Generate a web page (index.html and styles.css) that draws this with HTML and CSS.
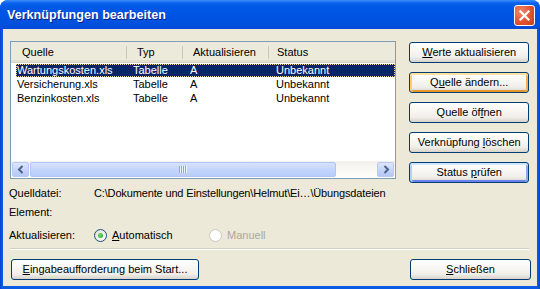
FILE: index.html
```html
<!DOCTYPE html>
<html lang="de">
<head>
<meta charset="utf-8"/>
<title>Verknüpfungen bearbeiten</title>
<link rel="stylesheet" href="styles.css">
</head>
<body>
<div class="window">
	<div class="titlebar">
		<span class="title">Verknüpfungen bearbeiten</span>
		<span class="close">
			<svg width="13" height="13" viewBox="0 0 13 13"><path d="M2.5 2.5 L10.5 10.5 M10.5 2.5 L2.5 10.5" stroke="#fff" stroke-width="2.2" stroke-linecap="square"/></svg>
		</span>
	</div>
	<div class="client">
		<div class="top">
			<div class="list">
				<div class="head">
					<span class="hc c1">Quelle</span>
					<span class="hc c2">Typ</span>
					<span class="hc c3">Aktualisieren</span>
					<span class="hc c4">Status</span>
				</div>
				<div class="rows">
					<div class="row sel"><span class="c1">Wartungskosten.xls</span><span class="c2">Tabelle</span><span class="c3">A</span><span class="c4">Unbekannt</span></div>
					<div class="row"><span class="c1">Versicherung.xls</span><span class="c2">Tabelle</span><span class="c3">A</span><span class="c4">Unbekannt</span></div>
					<div class="row"><span class="c1">Benzinkosten.xls</span><span class="c2">Tabelle</span><span class="c3">A</span><span class="c4">Unbekannt</span></div>
				</div>
				<div class="hscroll">
					<span class="sbtn"><svg width="8" height="9" viewBox="0 0 8 9"><path d="M5.5 1 L2 4.5 L5.5 8" fill="none" stroke="#4d6185" stroke-width="2"/></svg></span>
					<span class="thumb"><span class="grip"></span></span>
					<span class="track"></span>
					<span class="sbtn"><svg width="8" height="9" viewBox="0 0 8 9"><path d="M2.5 1 L6 4.5 L2.5 8" fill="none" stroke="#4d6185" stroke-width="2"/></svg></span>
				</div>
			</div>
			<div class="actions">
				<button class="btn"><u>W</u>erte aktualisieren</button>
				<button class="btn hot">Q<u>u</u>elle ändern...</button>
				<button class="btn">Quelle öf<u>f</u>nen</button>
				<button class="btn">Verknüpfung <u>l</u>öschen</button>
				<button class="btn def">Status <u>p</u>rüfen</button>
			</div>
		</div>
		<div class="info">
			<span class="lbl">Quelldatei:</span><span class="path">C:\Dokumente und Einstellungen\Helmut\Ei…\Übungsdateien</span>
			<span class="lbl">Element:</span><span></span>
			<span class="lbl">Aktualisieren:</span>
			<span class="radios">
				<span class="radio on"><span class="dot"></span><span><u>A</u>utomatisch</span></span>
				<span class="radio off"><span class="dot"></span><span>Manuell</span></span>
			</span>
		</div>
		<div class="sep"></div>
		<div class="bottom">
			<button class="btn wide"><u>E</u>ingabeaufforderung beim Start...</button>
			<button class="btn close-btn"><u>S</u>chließen</button>
		</div>
	</div>
</div>
</body>
</html>
```

FILE: styles.css
```css
* {
	box-sizing:border-box;
}
body {
	margin:0;
	background:#fff;
	font:400 11px/13px "Liberation Sans", Arial, sans-serif;
	color:#000;
}
.window {
	width:540px;
	height:289px;
	display:flex;
	flex-direction:column;
	border-radius:8px 8px 0 0;
	overflow:hidden;
	background:linear-gradient(to right, #0a3fd0, #0a5ae6 2px, #0a5ae6 538px, #0a3fd0);
}
.titlebar {
	flex-shrink:0;
	height:29px;
	display:flex;
	align-items:center;
	justify-content:space-between;
	padding:0 5px 0 7px;
	background:linear-gradient(#3d8ffb 0, #0a62ec 3px, #0058e6 7px, #0054e3 50%, #0050dc 85%, #0847d6 100%);
}
.title {
	color:#fff;
	font:700 12.6px/15px "Liberation Sans", Arial, sans-serif;
	text-shadow:1px 1px 0 #0a1f8a;
	padding-top:1px;
}
.close {
	width:21px;
	height:21px;
	margin-top:1px;
	display:flex;
	align-items:center;
	justify-content:center;
	border:1px solid #fff;
	border-radius:3px;
	background:radial-gradient(circle at 30% 30%, #f08a6e, #e0532f 55%, #c83c17);
}
.client {
	flex:1;
	min-height:0;
	margin:0 3px 3px;
	background:#ece9d8;
	padding:12px 8px 0 7px;
}
.top {
	display:flex;
	align-items:flex-start;
	gap:13px;
}
.list {
	width:388px;
	height:138px;
	border:1px solid #7f9db9;
	background:#fff;
	display:flex;
	flex-direction:column;
}
.head {
	height:21px;
	display:flex;
	background:#ebeadb;
	border-bottom:1px solid #d6d2c2;
	box-shadow:inset 0 -2px 0 #e2ded0;
}
.hc {
	line-height:20px;
	padding-left:10px;
	background:linear-gradient(#cbc7b8, #cbc7b8) right 4px / 1px 13px no-repeat;
}
.head .c1 { width:116px; padding-left:11px; }
.head .c2 { width:56px; }
.head .c3 { width:86px; }
.head .c4 { flex:1; background:none; padding-left:8px; }
.rows {
	flex:1;
	padding:1px 0 0 5px;
}
.row {
	display:flex;
	height:14px;
	line-height:13px;
}
.row span {
	white-space:nowrap;
}
.row .c1 { width:111px; padding-left:1px; }
.row .c2 { width:56px; padding-left:6px; }
.row .c3 { width:86px; padding-left:7px; }
.row .c4 { flex:1; padding-left:7px; }
.row.sel {
	background:#0a246a;
	color:#fff;
	height:13px;
	margin-bottom:1px;
	outline:1px dotted #e8d890;
	outline-offset:-1px;
}
.hscroll {
	height:17px;
	display:flex;
	padding:1px;
	background:linear-gradient(#f3f1ec, #fefefb);
}
.sbtn {
	width:17px;
	height:15px;
	display:flex;
	align-items:center;
	justify-content:center;
	border:1px solid #b7c9f5;
	border-radius:2px;
	background:linear-gradient(#dce6fd, #c2d3fb 60%, #b4c8f6);
}
.thumb {
	width:306px;
	height:15px;
	margin-left:1px;
	display:flex;
	align-items:center;
	justify-content:center;
	border:1px solid #b1c4f4;
	border-radius:2px;
	background:linear-gradient(#d6e2fe, #c4d5fd 50%, #b9cdfb);
}
.grip {
	width:8px;
	height:7px;
	background:repeating-linear-gradient(to right, #8ca5e6 0 1px, #eef3ff 1px 2px);
}
.track {
	flex:1;
}
.actions {
	width:120px;
	padding-top:1px;
	display:flex;
	flex-direction:column;
	gap:9px;
}
.btn {
	height:21px;
	padding:0;
	border:1px solid #003c74;
	border-radius:3px;
	background:linear-gradient(#fff, #f7f6f2 45%, #efeee9 75%, #d8d3c8);
	font:400 11px/13px "Liberation Sans", Arial, sans-serif;
	color:#000;
	text-align:center;
	white-space:nowrap;
}
.btn.hot {
	box-shadow:inset 0 2px 0 #ffe1a0, inset 2px 0 0 #fbcd6f, inset -2px 0 0 #f5b04a, inset 0 -2px 0 #e5972a;
}
.btn.def {
	box-shadow:inset 0 2px 0 #cee7ff, inset 2px 0 0 #b3d0fa, inset -2px 0 0 #8dade8, inset 0 -2px 0 #6982ee;
}
.info {
	display:grid;
	grid-template-columns:85px 1fr;
	grid-template-rows:19px 23px 19px;
	padding-top:4px;
	margin-left:-1px;
	align-items:start;
}
.path {
	letter-spacing:-.15px;
}
.radios {
	display:flex;
	align-items:center;
	height:13px;
}
.radio {
	display:flex;
	align-items:center;
	gap:5px;
}
.radio.on {
	width:115px;
}
.radio.off {
	color:#aca899;
}
.dot {
	width:13px;
	height:13px;
	border-radius:50%;
	border:1px solid #1c5180;
	background:radial-gradient(circle at 65% 65%, #fff, #e6e5dc 70%, #d4d1c2);
	display:flex;
	align-items:center;
	justify-content:center;
}
.radio.on .dot::before {
	content:"";
	width:5px;
	height:5px;
	border-radius:50%;
	background:radial-gradient(circle at 40% 40%, #6ee06e, #21a121);
}
.radio.off .dot {
	border-color:#cac8bb;
	background:#fff;
}
.sep {
	height:2px;
	border-top:1px solid #d0d0bf;
	border-bottom:1px solid #fff;
}
.bottom {
	display:flex;
	justify-content:space-between;
	padding:9px 0 0 1px;
}
.wide {
	width:188px;
}
.close-btn {
	width:121px;
	margin-right:-2px;
}
```
